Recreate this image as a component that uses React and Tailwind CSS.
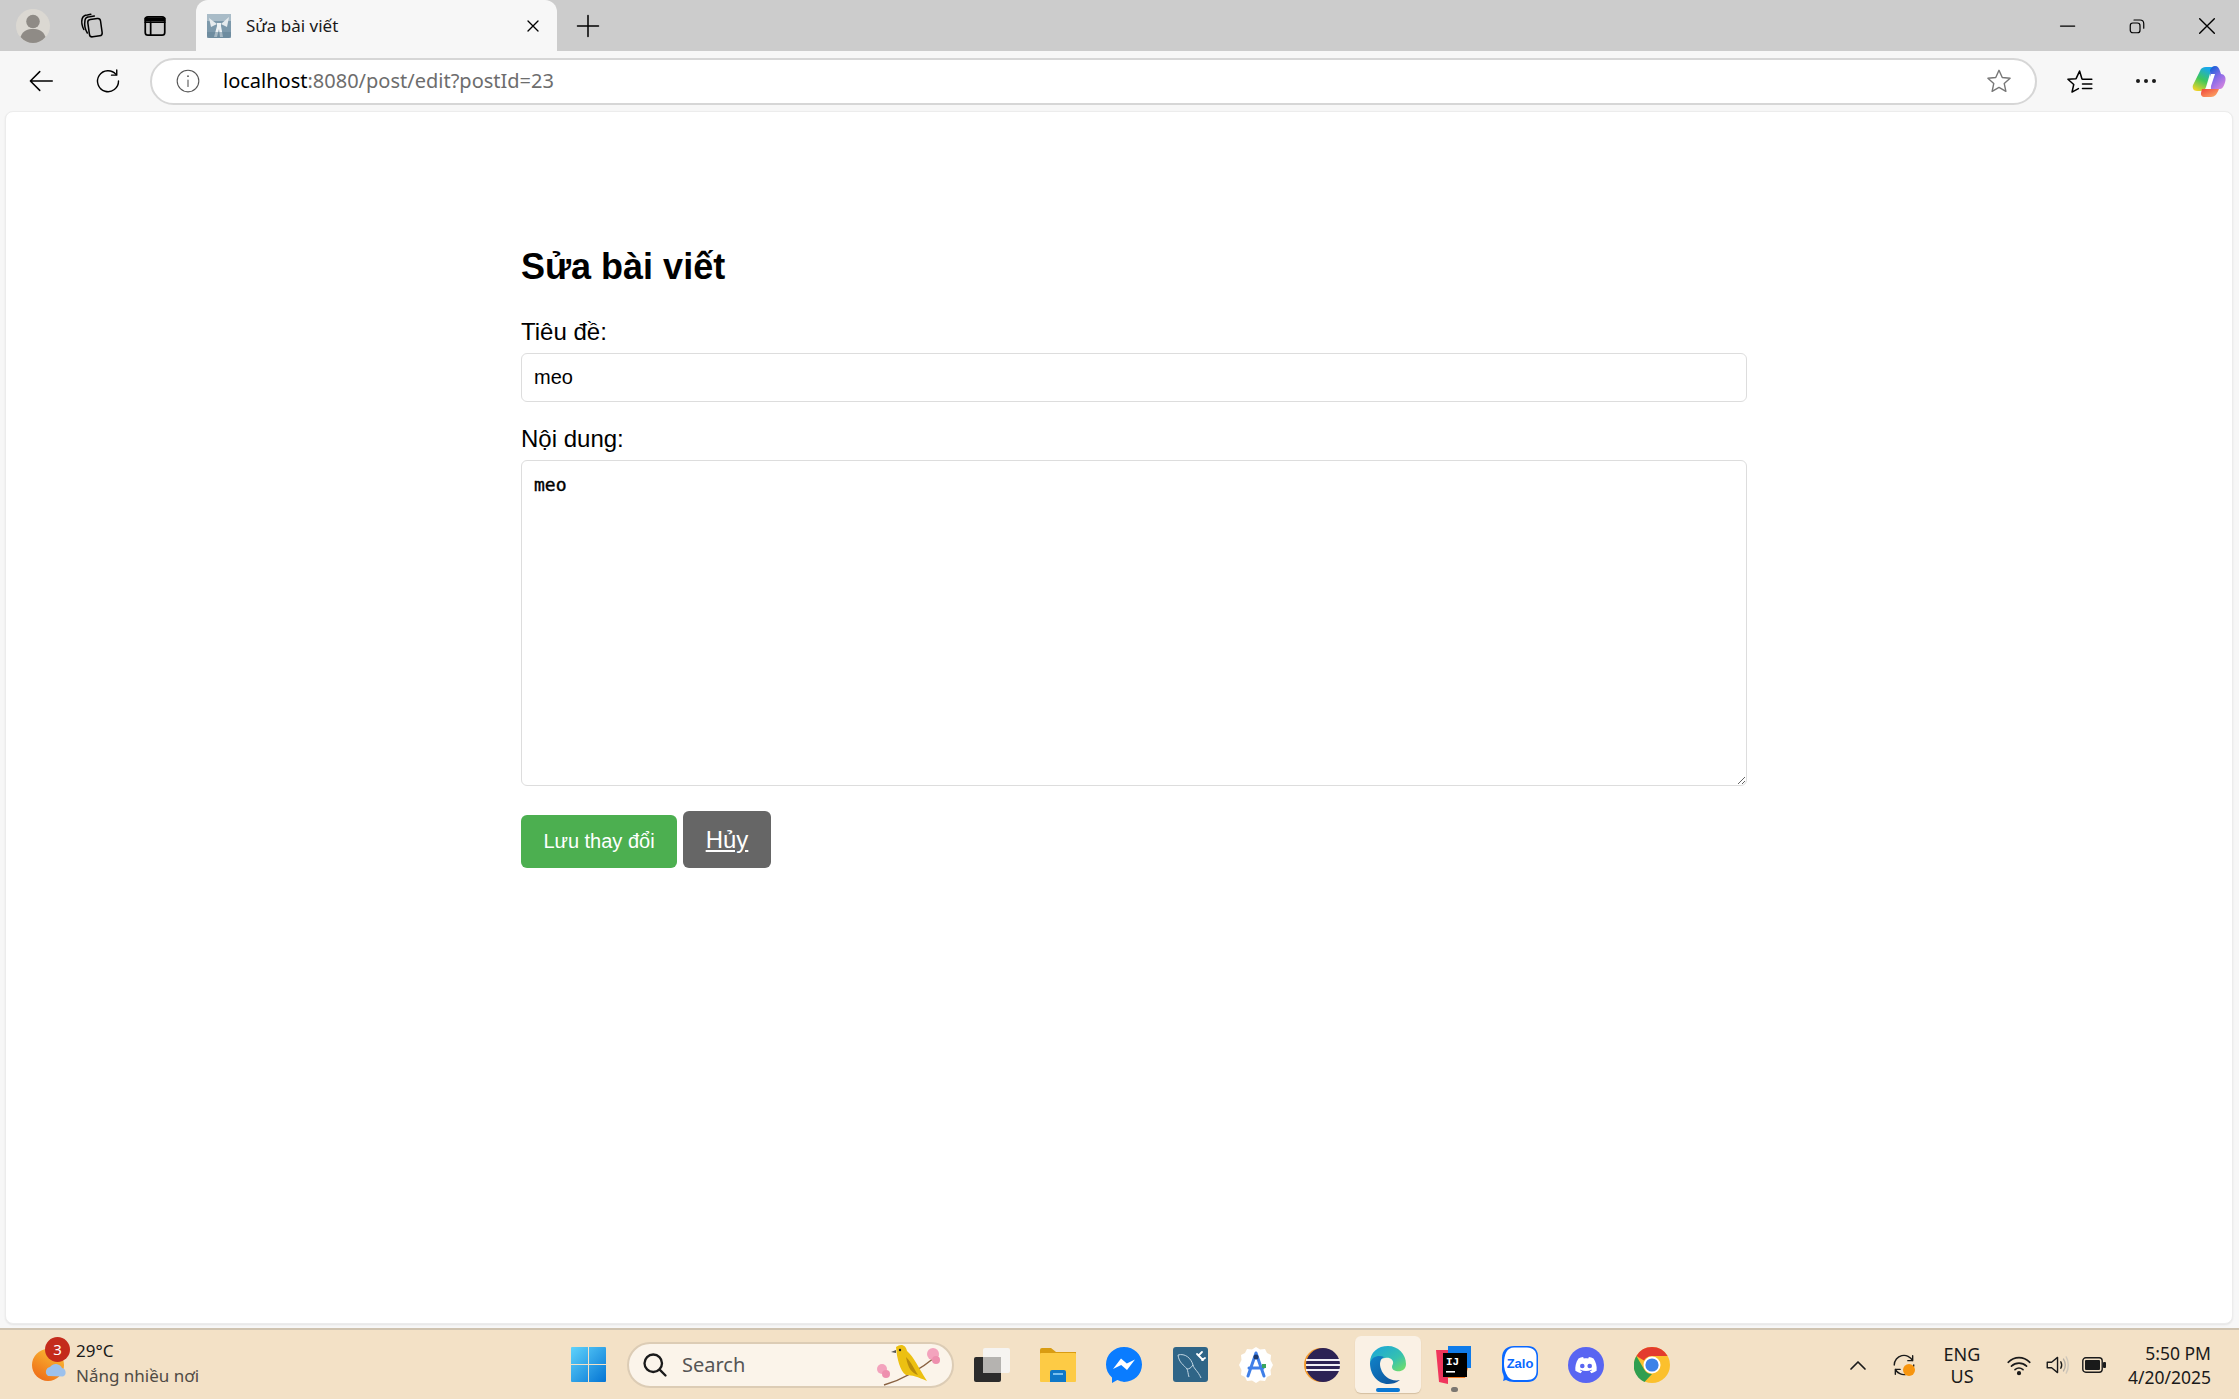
const Stroke = ({ size = 24, w = 1.5, color = "currentColor", vb = "0 0 24 24", children, className = "" }) => (
  <svg width={size} height={size} viewBox={vb} fill="none" stroke={color} strokeWidth={w} strokeLinecap="round" strokeLinejoin="round" className={className}>
    {children}
  </svg>
);

const Favicon = () => (
  <svg width="24" height="24" viewBox="0 0 24 24">
    <rect width="24" height="24" rx="2" fill="#7d99ab" />
    <rect y="0" width="24" height="7" fill="#a9bcc8" />
    <path d="M2 4 L10 10 L4 13 Z M22 3 L14 10 L20 13 Z" fill="#e6ebee" />
    <path d="M10 9 h4 v3 l2 11 h-3 l-1 -8 l-2 8 h-3 l3 -11 Z" fill="#eef2f4" />
    <rect x="0" y="18" width="24" height="6" fill="#5f7f94" opacity="0.5" />
  </svg>
);

const Avatar = () => (
  <svg width="34" height="34" viewBox="0 0 34 34">
    <circle cx="17" cy="17" r="17" fill="#dbd8d2" />
    <circle cx="17" cy="12.5" r="6.8" fill="#8f8b86" />
    <path d="M4.5 28 C7 21 12 20 17 20 C22 20 27 21 29.5 28 C26 32 21.5 34 17 34 C12.5 34 8 32 4.5 28 Z" fill="#8f8b86" />
  </svg>
);

const Copilot = () => (
  <svg width="34" height="31" viewBox="0 0 34 31">
    <defs>
      <linearGradient id="cpa" x1="0.6" y1="0" x2="0.2" y2="1">
        <stop offset="0" stopColor="#19a8ea" />
        <stop offset="0.5" stopColor="#3fc85a" />
        <stop offset="1" stopColor="#f5d327" />
      </linearGradient>
      <linearGradient id="cpb" x1="0.2" y1="0" x2="0.8" y2="1">
        <stop offset="0" stopColor="#1560d8" />
        <stop offset="0.5" stopColor="#8b6be8" />
        <stop offset="1" stopColor="#d886de" />
      </linearGradient>
      <linearGradient id="cpc" x1="0" y1="0" x2="1" y2="1">
        <stop offset="0" stopColor="#f0443a" />
        <stop offset="1" stopColor="#fdb36b" />
      </linearGradient>
    </defs>
    <path d="M8 5 C9 2 11 1 14 1 H20 L14 21 C13 24 11 25 8 25 H5 C1.5 25 0 22 1 19 Z" fill="url(#cpa)" />
    <path d="M18 4 C19 1.5 21 0 23 0 C26 0 27 2 28 5 L29 8 C32 8 34 11 33.5 14 C33 18 31 23 28 23 H19 Z" fill="url(#cpb)" />
    <path d="M10 23 H27 C25 28 23 31 19 31 H12 C10 31 8.5 29 9 27 Z" fill="url(#cpc)" />
    <path d="M14 23 L19 8 H23 L18 23 Z" fill="#ffffff" />
  </svg>
);

const Weather = () => (
  <svg width="36" height="34" viewBox="0 0 36 34">
    <defs>
      <linearGradient id="sun" x1="0.8" y1="0" x2="0.2" y2="1">
        <stop offset="0" stopColor="#fbbf35" />
        <stop offset="1" stopColor="#ee6a16" />
      </linearGradient>
    </defs>
    <circle cx="17" cy="16" r="16" fill="url(#sun)" />
    <path d="M17 27 a5 5 0 0 1 2 -9 a7 7 0 0 1 12 1 a4.5 4.5 0 0 1 1 8.5 Z" fill="#9cc1ec" />
  </svg>
);

const WinLogo = () => (
  <svg width="35" height="35" viewBox="0 0 35 35">
    <defs>
      <linearGradient id="win" x1="0" y1="0" x2="1" y2="1">
        <stop offset="0" stopColor="#5fd3fb" />
        <stop offset="1" stopColor="#0474d4" />
      </linearGradient>
    </defs>
    <path d="M1 0 H17 V17 H0 V1 Q0 0 1 0 Z M18 0 H34 Q35 0 35 1 V17 H18 Z M0 18 H17 V35 H1 Q0 35 0 34 Z M18 18 H35 V34 Q35 35 34 35 H18 Z" fill="url(#win)" />
  </svg>
);

const Bird = () => (
  <svg width="72" height="44" viewBox="0 0 72 44">
    <path d="M8 42 C22 38 40 30 62 12" stroke="#8a6242" strokeWidth="1.5" fill="none" />
    <circle cx="6" cy="26" r="5" fill="#f3a3bd" />
    <circle cx="10" cy="31" r="4" fill="#ee8fae" />
    <circle cx="57" cy="11" r="6" fill="#f3a3bd" />
    <circle cx="60" cy="17" r="4" fill="#ee8fae" />
    <path d="M20 4 C25 0 30 2 31 8 C38 14 42 24 51 38 C42 34 36 32 30 32 C24 28 21 16 20 4 Z" fill="#ecc012" />
    <path d="M30 14 C36 20 38 26 42 32 C36 30 32 26 30 14 Z" fill="#b98c0c" />
    <path d="M20 7 L15 9 L20 10 Z" fill="#555" />
    <circle cx="24" cy="7" r="1.2" fill="#222" />
  </svg>
);

const TaskView = () => (
  <svg width="36" height="34" viewBox="0 0 36 34">
    <rect x="0" y="9" width="27" height="25" rx="2" fill="#2b2b2b" />
    <rect x="9" y="0" width="27" height="25" rx="2" fill="#f6f4f1" />
    <rect x="9" y="9" width="18" height="16" fill="#b5b3b0" />
  </svg>
);

const Folder = () => (
  <svg width="36" height="34" viewBox="0 0 36 34">
    <path d="M0 2 Q0 0 2 0 H11 L16 4 H36 V8 H0 Z" fill="#d99c12" />
    <rect x="0" y="5" width="36" height="29" rx="1" fill="#fdcb45" />
    <path d="M10 24 Q10 22 12 22 H24 Q26 22 26 24 V34 H10 Z" fill="#0f78c8" />
    <rect x="13" y="25" width="10" height="2" fill="#7ac0ee" />
  </svg>
);

const Messenger = () => (
  <svg width="36" height="36" viewBox="0 0 36 36">
    <path d="M18 0 C8 0 0 7.5 0 17.5 C0 22.8 2.2 27.3 6 30.5 V36 L11.3 33.1 C13.4 33.7 15.6 34.9 18 34.9 C28 34.9 36 27.5 36 17.5 C36 7.5 28 0 18 0 Z" fill="#0a7cff" />
    <path d="M7 22 L15 11.5 L20.8 16.5 L29 12.5 L21 23 L15.2 18 Z" fill="#ffffff" />
  </svg>
);

const MySql = () => (
  <svg width="35" height="35" viewBox="0 0 35 35">
    <rect width="35" height="35" rx="3" fill="#2f6587" />
    <path d="M5 8 C12 6 18 11 20 18 C21 22 25 24 28 31 M5 8 C6 16 11 18 14 22 C15 24 15 27 16 30 M20 18 C18 21 16 22 14 22" stroke="#cfe0ea" strokeWidth="0.9" fill="none" />
    <path d="M24 7 L30 13 M29 5 L26 8 M32 11 L29 13" stroke="#ffffff" strokeWidth="1.8" strokeLinecap="round" />
  </svg>
);

const AndroidStudio = () => (
  <svg width="36" height="36" viewBox="0 0 36 36">
    <path d="M18 0 L22 2.5 L27 2 L29 6 L33 8 L32.5 13 L35 18 L32.5 23 L33 28 L29 30 L27 34 L22 33.5 L18 36 L14 33.5 L9 34 L7 30 L3 28 L3.5 23 L1 18 L3.5 13 L3 8 L7 6 L9 2 L14 2.5 Z" fill="#ffffff" />
    <path d="M18 6 L10 29 M18 6 L26 29 M11 21 H25" stroke="#3f7fe8" strokeWidth="3" fill="none" strokeLinecap="round" />
    <circle cx="18" cy="10" r="2.5" fill="#1d3a6e" />
    <rect x="24" y="17" width="4" height="4" fill="#3ba55d" />
  </svg>
);

const Eclipse = () => (
  <svg width="36" height="36" viewBox="0 0 36 36">
    <circle cx="17" cy="18" r="17" fill="#f29a2e" />
    <circle cx="19" cy="18" r="17" fill="#2c2255" />
    <rect x="2" y="12" width="34" height="2" fill="#f2f0f7" />
    <rect x="2" y="17" width="34" height="2" fill="#f2f0f7" />
    <rect x="2" y="22" width="34" height="2" fill="#f2f0f7" />
  </svg>
);

const Edge = () => (
  <svg width="36" height="38" viewBox="0 0 36 38">
    <defs>
      <linearGradient id="eda" x1="0" y1="0" x2="1" y2="1">
        <stop offset="0" stopColor="#1aa3dd" />
        <stop offset="0.6" stopColor="#35c1b0" />
        <stop offset="1" stopColor="#7be25e" />
      </linearGradient>
      <linearGradient id="edb" x1="0" y1="0" x2="1" y2="1">
        <stop offset="0" stopColor="#1183c9" />
        <stop offset="1" stopColor="#0c4f98" />
      </linearGradient>
    </defs>
    <path d="M0 17 C0 6 8 0 18 0 C28 0 36 8 36 18 C36 24 31 26 26 25 C22 24 21 21 23 18 C24 14 20 11 15 12 C7 13 2 16 0 17 Z" fill="url(#eda)" />
    <path d="M0 17 C2 10 9 9 14 11 C10 13 9 18 11 23 C13 30 21 36 30 34 C26 37 22 38 18 38 C8 38 0 29 0 17 Z" fill="url(#edb)" />
  </svg>
);

const Idea = () => (
  <svg width="36" height="38" viewBox="0 0 36 38">
    <path d="M12 0 H35 V22 H12 Z" fill="#0f7bea" />
    <path d="M0 4 H12 V38 L3 36 Z" fill="#f0355c" />
    <path d="M12 22 H32 L29 32 H12 Z" fill="#f57a22" />
    <rect x="7" y="7" width="24" height="24" fill="#000000" />
    <text x="10" y="19" fill="#ffffff" fontSize="11" fontWeight="700" fontFamily="Liberation Mono, monospace">IJ</text>
    <rect x="10" y="25" width="9" height="1.6" fill="#ffffff" />
  </svg>
);

const Zalo = () => (
  <svg width="36" height="38" viewBox="0 0 36 38">
    <path d="M12 0 H26 C32 0 36 4 36 10 V26 C36 32 32 36 26 36 H12 C9 36 6 35 4 34 L1 35 C2 32 2 31 1 28 C0 26 0 24 0 22 V12 C0 4 5 0 12 0 Z" fill="#0a68ff" />
    <path d="M12 1.5 H25 C31 1.5 34.5 5 34.5 11 V25 C34.5 31 31 34 25 34 H12 C10 34 8 33 6 31 C3 26 2 22 2 18 C2 8 5 1.5 12 1.5 Z" fill="#ffffff" />
    <text x="18" y="22" textAnchor="middle" fill="#0a68ff" fontSize="13" fontWeight="700" fontFamily="Liberation Sans, sans-serif">Zalo</text>
  </svg>
);

const Discord = () => (
  <svg width="36" height="36" viewBox="0 0 36 36">
    <circle cx="18" cy="18" r="18" fill="#5865f2" />
    <path d="M25.5 11.5 C24 10.8 22.5 10.3 20.9 10 L20.2 11.4 C18.7 11.2 17.3 11.2 15.8 11.4 L15.1 10 C13.5 10.3 12 10.8 10.5 11.5 C7.7 15.7 7 19.7 7.4 23.7 C9.2 25 11 25.8 12.7 26.3 L14.1 24.2 C13.3 23.9 12.6 23.6 11.9 23.1 L12.4 22.7 C16 24.4 20 24.4 23.6 22.7 L24.1 23.1 C23.4 23.6 22.7 23.9 21.9 24.2 L23.3 26.3 C25 25.8 26.8 25 28.6 23.7 C29.1 19 27.9 15 25.5 11.5 Z" fill="#ffffff" />
    <circle cx="14.3" cy="19" r="2.3" fill="#5865f2" />
    <circle cx="21.7" cy="19" r="2.3" fill="#5865f2" />
  </svg>
);

const Chrome = () => (
  <svg width="36" height="36" viewBox="0 0 36 36">
    <circle cx="18" cy="18" r="18" fill="#fbc02d" />
    <path d="M18 0 A18 18 0 0 1 33.6 9 H18 A9 9 0 0 0 10 13.5 L2.4 9 A18 18 0 0 1 18 0 Z" fill="#e33b2e" />
    <path d="M2.4 9 L10.2 22.5 A9 9 0 0 0 18 27 L10.5 35 A18 18 0 0 1 2.4 9 Z" fill="#2f9e4f" />
    <circle cx="18" cy="18" r="8.5" fill="#ffffff" />
    <circle cx="18" cy="18" r="6.6" fill="#3b82e8" />
  </svg>
);

const TrayIcon = ({ children, active, dot }) => (
  <div className={`relative w-[66px] h-[57px] flex items-center justify-center rounded-md ${active ? "bg-[#faf1e5] shadow-[0_1px_1px_rgba(120,90,50,0.25)]" : ""}`}>
    {children}
    {active && <span className="absolute bottom-[1px] left-[21px] w-[24px] h-[4px] rounded-full bg-[#0a78d4]" />}
    {dot && <span className="absolute bottom-[1px] left-[30px] w-[7px] h-[5px] rounded-full bg-[#7b7670]" />}
  </div>
);

const App = () => {
  return (
    <div className="w-[2239px] h-[1399px] flex flex-col overflow-hidden bg-[#f7f7f7] font-['Liberation_Sans',sans-serif] text-black">
      {/* tab strip */}
      <div className="h-[51px] bg-[#cccccc] flex items-center shrink-0">
        <div className="w-[66px] flex justify-center"><Avatar /></div>
        <div className="w-[52px] flex justify-center">
          <Stroke size={28} w={1.3}>
            <rect x="9" y="6" width="11" height="15" rx="2.5" transform="rotate(-8 14 13)" />
            <path d="M8 18 C6 15 5.5 10 6 7 C6.3 5 8 4 10 4 L14 3.5" />
            <path d="M5 15 C3.5 12 3 8 3.5 6 C4 4 6 2.5 8 2.5 L11 2" />
          </Stroke>
        </div>
        <div className="w-[74px] flex justify-center">
          <Stroke size={26} w={1.6}>
            <rect x="3" y="3.5" width="18" height="17" rx="2.5" />
            <path d="M3 8.5 H21 M3 5 H21 M3 6.5 H21" />
            <path d="M8 8.5 V20.5" />
          </Stroke>
        </div>
        <div className="w-[361px] h-[51px] ml-[4px] bg-[#f7f7f7] rounded-t-[12px] flex items-center pl-[11px] pr-[14px]">
          <Favicon />
          <span className="ml-[15px] text-[17px] font-['Noto_Sans',sans-serif] text-[#1a1a1a] flex-1">Sửa bài viết</span>
          <Stroke size={20} w={1.6}><path d="M6 6 L18 18 M18 6 L6 18" /></Stroke>
        </div>
        <div className="ml-[17px] flex">
          <Stroke size={28} w={1.3}><path d="M12 3 V21 M3 12 H21" /></Stroke>
        </div>
        <div className="ml-auto flex items-center">
          <div className="w-[62px] flex justify-center"><Stroke size={20} w={1.5}><path d="M3 12 H20" /></Stroke></div>
          <div className="w-[76px] flex justify-center">
            <Stroke size={18} w={1.6}>
              <rect x="3" y="8" width="13" height="13" rx="3.5" />
              <path d="M8 4 H16 C19 4 21 6 21 9 V15" />
            </Stroke>
          </div>
          <div className="w-[64px] flex justify-center"><Stroke size={22} w={1.5}><path d="M4 4 L20 20 M20 4 L4 20" /></Stroke></div>
        </div>
      </div>

      {/* toolbar */}
      <div className="h-[60px] flex items-center shrink-0">
        <div className="w-[82px] flex justify-center">
          <Stroke size={30} w={1.2}><path d="M3.5 12 H21 M11 4.5 L3.5 12 L11 19.5" /></Stroke>
        </div>
        <div className="w-[52px] flex justify-center">
          <Stroke size={28} w={1.2}>
            <path d="M19 6.5 A9 9 0 1 0 21 12" />
            <path d="M19.5 2.5 V7 H15" />
          </Stroke>
        </div>
        <div className="ml-[16px] w-[1887px] h-[47px] bg-white border-2 border-[#d6d6d6] rounded-[24px] flex items-center pl-[23px] pr-[22px]">
          <Stroke size={26} w={1} color="#555555">
            <circle cx="12" cy="12" r="10" />
            <path d="M12 11 V17" />
            <path d="M12 7.4 V7.6" strokeWidth="1.6" />
          </Stroke>
          <span className="ml-[22px] text-[20px] font-['Noto_Sans',sans-serif] text-[#6d6d6d] flex-1">
            <span className="text-black">localhost</span>:8080/post/edit?postId=23
          </span>
          <Stroke size={28} w={1.2} color="#777777">
            <path d="M12 2.8 L14.8 9 L21.5 9.7 L16.5 14.2 L17.9 20.9 L12 17.5 L6.1 20.9 L7.5 14.2 L2.5 9.7 L9.2 9 Z" />
          </Stroke>
        </div>
        <div className="ml-[10px] w-[64px] flex justify-center">
          <Stroke size={28} w={1.3}>
            <path d="M14.5 10 L12.5 3.5 L9.5 10 L2.5 10.5 L7.5 15 L6 21.5 L11.5 18.5" />
            <path d="M15 10.5 H23 M15 14.5 H23 M15 18.5 H23" />
          </Stroke>
        </div>
        <div className="ml-[2px] w-[66px] flex justify-center gap-[4px]">
          <span className="w-[4px] h-[4px] rounded-full bg-[#1a1a1a]" />
          <span className="w-[4px] h-[4px] rounded-full bg-[#1a1a1a]" />
          <span className="w-[4px] h-[4px] rounded-full bg-[#1a1a1a]" />
        </div>
        <div className="w-[60px] flex justify-center"><Copilot /></div>
      </div>

      {/* page */}
      <div className="flex-1 ml-[5px] mr-[6px] bg-white rounded-[8px] border border-[#ececec] shadow-[0_1px_2px_rgba(0,0,0,0.08)] pt-[133px] pl-[515px]">
        <div className="w-[1226px] flex flex-col">
          <h2 className="text-[36px] font-bold leading-[44px] mb-[29px]">Sửa bài viết</h2>
          <label className="text-[24px] leading-[28px] mb-[7px]">Tiêu đề:</label>
          <input defaultValue="meo" className="h-[49px] border border-[#dddddd] rounded-[6px] px-[12px] text-[20px] outline-none mb-[23px]" />
          <label className="text-[24px] leading-[28px] mb-[7px]">Nội dung:</label>
          <textarea defaultValue="meo" className="h-[326px] border border-[#dddddd] rounded-[6px] px-[12px] py-[13px] text-[18px] leading-[22px] [-webkit-text-stroke:0.4px_black] font-['DejaVu_Sans_Mono',monospace] outline-none" />
          <div className="mt-[25px] flex items-end gap-[6px]">
            <button className="w-[156px] h-[53px] pb-[2px] bg-[#4caf50] text-white rounded-[6px] text-[20px]">Lưu thay đổi</button>
            <a href="#" className="w-[88px] h-[57px] bg-[#666666] text-white rounded-[6px] text-[24px] underline flex items-center justify-center">Hủy</a>
          </div>
        </div>
      </div>

      {/* taskbar */}
      <div className="mt-[4px] h-[71px] shrink-0 bg-[#f3e1c6] border-t-[2px] border-[#cfc3b0] flex items-center">
        <div className="w-[555px] pl-[31px] flex items-center">
          <div className="relative mt-[2px]">
            <Weather />
            <span className="absolute -top-[12px] left-[14px] w-[25px] h-[25px] rounded-full bg-[#c42b1c] text-white text-[15px] flex items-center justify-center font-['Noto_Sans',sans-serif]">3</span>
          </div>
          <div className="ml-[9px] -mt-[3px] font-['Noto_Sans',sans-serif] leading-[25px]">
            <div className="text-[17px] text-[#1a1a1a]">29°C</div>
            <div className="text-[17px] text-[#4f4b45]">Nắng nhiều nơi</div>
          </div>
        </div>
        <TrayIcon><WinLogo /></TrayIcon>
        <div className="ml-[6px] w-[327px] h-[46px] bg-[#fbf4ea] border-2 border-[#dcccb5] rounded-full flex items-center pl-[12px] pr-[4px]">
          <Stroke size={28} w={2} color="#1a1a1a"><circle cx="10.5" cy="10.5" r="7.5" /><path d="M16 16 L21 21" /></Stroke>
          <span className="ml-[13px] text-[20px] text-[#555555] font-['Noto_Sans',sans-serif] flex-1">Search</span>
          <Bird />
        </div>
        <div className="ml-[5px] flex items-center">
          <TrayIcon><TaskView /></TrayIcon>
          <TrayIcon><Folder /></TrayIcon>
          <TrayIcon><Messenger /></TrayIcon>
          <TrayIcon><MySql /></TrayIcon>
          <TrayIcon><AndroidStudio /></TrayIcon>
          <TrayIcon><Eclipse /></TrayIcon>
          <TrayIcon active><Edge /></TrayIcon>
          <TrayIcon dot><Idea /></TrayIcon>
          <TrayIcon><Zalo /></TrayIcon>
          <TrayIcon><Discord /></TrayIcon>
          <TrayIcon><Chrome /></TrayIcon>
        </div>
        <div className="ml-[161px] flex items-center">
          <Stroke size={24} w={1.7} color="#1a1a1a"><path d="M5 16 L12 9 L19 16" /></Stroke>
          <div className="relative ml-[21px] w-[26px] h-[26px]">
            <Stroke size={26} w={1.3} color="#1a1a1a">
              <path d="M3 12 A9 9 0 0 1 20 8 M20 3.5 V8 H15.5" />
              <path d="M21 12 A9 9 0 0 1 4 16 M4 20.5 V16 H8.5" />
            </Stroke>
            <span className="absolute left-[12px] top-[12px] w-[12px] h-[12px] rounded-full bg-[#f7950f]" />
          </div>
          <div className="ml-[20px] w-[50px] text-center text-[18px] leading-[22px] text-[#1a1a1a] font-['Noto_Sans',sans-serif]">ENG<br />US</div>
          <div className="ml-[19px] flex items-center gap-[12px]">
            <Stroke size={26} w={1.5} color="#1a1a1a">
              <path d="M2 9.5 C8 3.8 16 3.8 22 9.5 M5 13 C9 9.3 15 9.3 19 13 M8.3 16.3 C10.5 14.5 13.5 14.5 15.7 16.3" />
              <circle cx="12" cy="19.5" r="1.2" fill="#1a1a1a" />
            </Stroke>
            <Stroke size={26} w={1.3} color="#1a1a1a">
              <path d="M3 9.5 H7 L12.5 5 V19 L7 14.5 H3 Z" />
              <path d="M15.5 9 C16.5 10.8 16.5 13.2 15.5 15" />
              <path d="M18 6.5 C20 9.8 20 14.2 18 17.5" stroke="#b5aea4" />
              <path d="M20.5 4.5 C23 8.5 23 15.5 20.5 19.5" stroke="#cfc7bb" />
            </Stroke>
            <svg width="24" height="16" viewBox="0 0 24 16">
              <rect x="0.8" y="0.8" width="19.4" height="14.4" rx="3" fill="none" stroke="#1a1a1a" strokeWidth="1.4" />
              <rect x="3" y="3" width="15" height="10" rx="1" fill="#1a1a1a" />
              <rect x="21" y="5" width="3" height="6" rx="1" fill="#1a1a1a" />
            </svg>
          </div>
          <div className="ml-[19px] w-[86px] text-right text-[17.5px] leading-[24px] text-[#1a1a1a] font-['Noto_Sans',sans-serif] whitespace-nowrap">5:50 PM<br />4/20/2025</div>
        </div>
      </div>
    </div>
  );
};

export default App;
